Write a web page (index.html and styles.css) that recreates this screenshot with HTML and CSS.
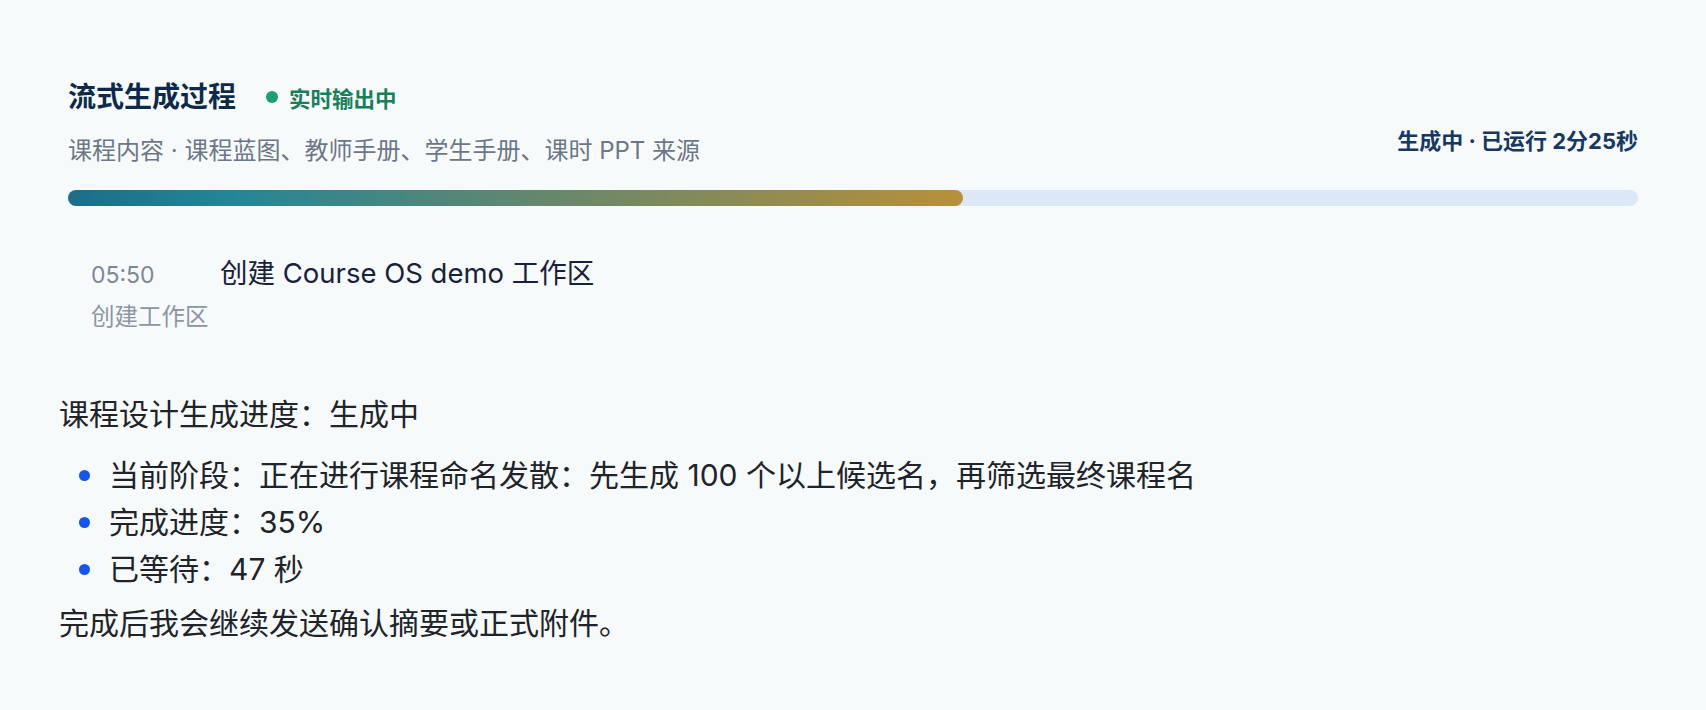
FILE: index.html
```html
<!DOCTYPE html>
<html lang="zh-CN">

<head>
    <meta charset="UTF-8" />
    <meta name="viewport" content="width=device-width, initial-scale=1.0" />
    <title>流式生成过程</title>
    <link rel="stylesheet" href="styles.css">
</head>

<body>
    <div class="page">
        <section class="stream-card">
            <div class="stream-header">
                <div class="stream-info">
                    <div class="title-row">
                        <h2>流式生成过程</h2>
                        <span class="live-tag"><span class="live-dot"></span>实时输出中</span>
                    </div>
                    <p class="sources">课程内容 · 课程蓝图、教师手册、学生手册、课时 PPT 来源</p>
                </div>
                <div class="run-meta">生成中 · 已运行 2分25秒</div>
            </div>

            <div class="progress-track">
                <div class="progress-fill" style="width: 57%"></div>
            </div>

            <div class="timeline">
                <div class="step">
                    <div class="step-head">
                        <span class="step-time">05:50</span>
                        <span class="step-title">创建 Course OS demo 工作区</span>
                    </div>
                    <div class="step-sub">创建工作区</div>
                </div>
            </div>
        </section>

        <div class="message">
            <p class="message-lead">课程设计生成进度：生成中</p>
            <ul class="status-list">
                <li>当前阶段：正在进行课程命名发散：先生成 100 个以上候选名，再筛选最终课程名</li>
                <li>完成进度：35%</li>
                <li>已等待：47 秒</li>
            </ul>
            <p class="message-end">完成后我会继续发送确认摘要或正式附件。</p>
        </div>
    </div>
</body>

</html>
```

FILE: styles.css
```css
* {
    box-sizing: border-box;
}

body {
    font-family: Inter, "Noto Sans CJK SC", sans-serif;
    background-color: #f7fafa;
    margin: 0;
}

.page {
    padding: 79px 59px 0;
}

/* Streaming card */
.stream-card {
    padding: 0 9px;
}

.stream-header {
    display: flex;
    justify-content: space-between;
    align-items: flex-end;
}

.title-row {
    display: flex;
    align-items: center;
    gap: 30px;
}

h2 {
    margin: 0;
    font-size: 28px;
    line-height: 36px;
    font-weight: 700;
    color: #0e2a4b;
}

.live-tag {
    display: inline-flex;
    align-items: center;
    gap: 11px;
    font-size: 21.5px;
    font-weight: 700;
    color: #17805a;
}

.live-dot {
    flex: none;
    width: 12px;
    height: 12px;
    border-radius: 50%;
    background: #1a9e75;
}

.sources {
    margin: 19px 0 0;
    font-size: 24px;
    line-height: 34px;
    color: #6b7788;
}

.run-meta {
    font-size: 22px;
    line-height: 30px;
    font-weight: 700;
    color: #163861;
    margin-bottom: 12px;
}

.progress-track {
    margin-top: 22px;
    height: 16px;
    border-radius: 8px;
    background: #dce7f7;
}

.progress-fill {
    height: 100%;
    border-radius: 8px;
    background: linear-gradient(90deg, #1c6d89 0%, #248598 18%, #6c8868 57%, #b98f3a 100%);
}

/* Timeline */
.timeline {
    margin-top: 49px;
    padding-left: 23px;
}

.step-head {
    display: flex;
    align-items: baseline;
}

.step-time {
    width: 129px;
    font-size: 23px;
    color: #7b8799;
}

.step-title {
    font-size: 27.5px;
    line-height: 36px;
    color: #17213a;
}

.step-sub {
    margin-top: 10px;
    font-size: 23.5px;
    line-height: 32px;
    color: #8b95a6;
}

/* Reply text */
.message {
    margin-top: 58px;
    font-size: 30px;
    line-height: 47px;
    color: #202329;
}

.message p {
    margin: 0;
}

.status-list {
    list-style: none;
    margin: 14px 0 7px;
    padding: 0;
}

.status-list li {
    display: flex;
    align-items: center;
    gap: 19px;
}

.status-list li::before {
    content: "";
    flex: none;
    width: 11px;
    height: 11px;
    margin-left: 20px;
    border-radius: 50%;
    background: #1456f0;
}
```
